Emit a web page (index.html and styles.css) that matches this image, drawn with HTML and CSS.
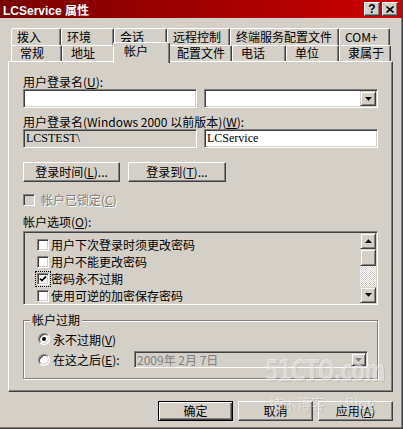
FILE: index.html
```html
<!DOCTYPE html>
<html lang="zh-CN">
<head>
    <meta charset="UTF-8" />
    <title>LCService 属性</title>
    <link rel="stylesheet" href="styles.css">
</head>
<body>
    <div class="window">
        <div class="titlebar">
            <span class="title">LCService 属性</span>
            <div class="title-btns">
                <span class="tbtn help">?</span>
                <span class="tbtn">
                    <svg width="8" height="7" viewBox="0 0 8 7"><path d="M0.5 0.5 L7.5 6.5 M7.5 0.5 L0.5 6.5" stroke="#000" stroke-width="1.6" fill="none"/></svg>
                </span>
            </div>
        </div>

        <div class="content">
            <div class="tabs">
                <div class="tab-row row-back">
                    <div class="tab">拨入</div>
                    <div class="tab">环境</div>
                    <div class="tab">会话</div>
                    <div class="tab">远程控制</div>
                    <div class="tab">终端服务配置文件</div>
                    <div class="tab">COM+</div>
                </div>
                <div class="tab-row row-front">
                    <div class="tab">常规</div>
                    <div class="tab">地址</div>
                    <div class="tab active">帐户</div>
                    <div class="tab">配置文件</div>
                    <div class="tab">电话</div>
                    <div class="tab">单位</div>
                    <div class="tab">隶属于</div>
                </div>
            </div>

            <div class="panel">
                <div class="label">用户登录名(<u>U</u>):</div>
                <div class="pair">
                    <div class="field"></div>
                    <div class="field combo">
                        <span class="drop">
                            <svg width="7" height="4" viewBox="0 0 7 4"><polygon points="0,0 7,0 3.5,3.8" fill="#000"/></svg>
                        </span>
                    </div>
                </div>

                <div class="label gap7">用户登录名(Windows 2000 以前版本)(<u>W</u>):</div>
                <div class="pair">
                    <div class="field disabled">LCSTEST\</div>
                    <div class="field">LCService</div>
                </div>

                <div class="btn-row">
                    <button class="btn w97">登录时间(<u>L</u>)...</button>
                    <button class="btn w98">登录到(<u>T</u>)...</button>
                </div>

                <div class="check-row disabled-text">
                    <span class="cb dis"></span>
                    <span>帐户已锁定(<u>C</u>)</span>
                </div>

                <div class="label gap8">帐户选项(<u>O</u>):</div>
                <div class="listbox">
                    <div class="items">
                        <div class="item"><span class="cb"></span>用户下次登录时须更改密码</div>
                        <div class="item"><span class="cb"></span>用户不能更改密码</div>
                        <div class="item"><span class="cb focus">
                            <svg width="8" height="8" viewBox="0 0 8 8"><path d="M1 3.6 L3 5.6 L7 1.4" stroke="#000" stroke-width="1.7" fill="none"/></svg>
                        </span>密码永不过期</div>
                        <div class="item"><span class="cb"></span>使用可逆的加密保存密码</div>
                    </div>
                    <div class="scrollbar">
                        <span class="sb-btn">
                            <svg width="7" height="4" viewBox="0 0 7 4"><polygon points="0,4 7,4 3.5,0.2" fill="#000"/></svg>
                        </span>
                        <span class="sb-thumb"></span>
                        <span class="sb-track"></span>
                        <span class="sb-btn">
                            <svg width="7" height="4" viewBox="0 0 7 4"><polygon points="0,0 7,0 3.5,3.8" fill="#000"/></svg>
                        </span>
                    </div>
                </div>

                <div class="group">
                    <div class="group-title">帐户过期</div>
                    <div class="radio-row">
                        <span class="radio on"></span>
                        <span>永不过期(<u>V</u>)</span>
                    </div>
                    <div class="radio-row second">
                        <span class="radio"></span>
                        <span>在这之后(<u>E</u>):</span>
                        <div class="date-box">
                            <span>2009年 2月 7日</span>
                            <span class="drop small">
                                <svg width="7" height="4" viewBox="0 0 7 4"><polygon points="0,0 7,0 3.5,3.8" fill="#808080"/></svg>
                            </span>
                        </div>
                    </div>
                </div>
            </div>

            <div class="actions">
                <button class="btn act default">确定</button>
                <button class="btn act">取消</button>
                <button class="btn act">应用(<u>A</u>)</button>
            </div>
        </div>

        <div class="watermark">
            <div class="wm-big">51CTO.com</div>
            <div class="wm-small">技术博客 — Blog</div>
        </div>
    </div>
</body>
</html>
```

FILE: styles.css
```css
* {
    box-sizing: border-box;
}
html, body {
    margin: 0;
    background: #d4d0c8;
}
body {
    font-family: "Noto Sans CJK SC", sans-serif;
    font-size: 12px;
    color: #000;
}
u {
    text-decoration: underline;
}
.window {
    position: relative;
    width: 403px;
    height: 429px;
    border-right: 1px solid #404040;
    border-bottom: 1px solid #404040;
    box-shadow: inset -1px -1px #808080;
    overflow: hidden;
}
.titlebar {
    height: 18px;
    background: linear-gradient(to right, #780000, #cc0000);
    display: flex;
    justify-content: space-between;
    align-items: center;
    padding: 0 4px 0 3px;
}
.title {
    color: #fff;
    font: bold 12px "Liberation Sans", "Noto Sans CJK SC", sans-serif;
}
.title-btns {
    display: flex;
    gap: 2px;
}
.tbtn {
    width: 16px;
    height: 14px;
    background: #d4d0c8;
    border: 1px solid;
    border-color: #fff #404040 #404040 #fff;
    box-shadow: inset -1px -1px #808080;
    display: flex;
    align-items: center;
    justify-content: center;
}
.help {
    font: bold 12px "Liberation Sans", sans-serif;
    line-height: 12px;
}
.content {
    padding: 0 8px;
}
.tabs {
    padding: 10px 0 0 3px;
}
.tab-row {
    display: grid;
}
.row-back {
    grid-template-columns: 50px 53px 53px 63px 109px 51px;
    height: 17px;
}
.row-front {
    grid-template-columns: 51px 53px 53px 64px 54px 53px 52px;
    height: 16px;
}
.tab {
    border: 1px solid;
    border-bottom: 0;
    border-color: #fff #404040 transparent #fff;
    box-shadow: inset -1px 0 #808080;
    border-radius: 2px 2px 0 0;
    white-space: nowrap;
    background: #d4d0c8;
}
.row-back .tab {
    padding-left: 5px;
    line-height: 15px;
}
.row-front .tab {
    padding-left: 8px;
    line-height: 14px;
}
.row-front .tab.active {
    position: relative;
    z-index: 2;
    margin: -3px -2px -2px -2px;
    padding-left: 10px;
    line-height: 15px;
}
.panel {
    width: 385px;
    height: 331px;
    border: 1px solid;
    border-color: #fff #404040 #404040 #fff;
    box-shadow: inset -1px -1px #808080;
    padding: 13px 14px 0;
}
.label {
    line-height: 14px;
    height: 14px;
    white-space: nowrap;
}
.gap7 {
    margin-top: 7px;
}
.gap8 {
    margin-top: 8px;
}
.pair {
    display: grid;
    grid-template-columns: 1fr 1fr;
    gap: 7px;
}
.field {
    height: 19px;
    background: #fff;
    border: 1px solid;
    border-color: #808080 #fff #fff #808080;
    box-shadow: inset 1px 1px #404040, inset -1px -1px #d4d0c8;
    padding-left: 2px;
    font: 12px "Liberation Serif", serif;
    line-height: 17px;
}
.field.disabled {
    background: #d4d0c8;
}
.combo {
    display: flex;
    justify-content: flex-end;
    padding: 1px;
}
.drop {
    width: 16px;
    height: 15px;
    background: #d4d0c8;
    border: 1px solid;
    border-color: #d4d0c8 #404040 #404040 #d4d0c8;
    box-shadow: inset 1px 1px #fff, inset -1px -1px #808080;
    display: flex;
    align-items: center;
    justify-content: center;
}
.drop.small {
    width: 15px;
    height: 13px;
}
.btn-row {
    display: flex;
    gap: 8px;
    margin-top: 14px;
}
.btn {
    height: 20px;
    padding: 0;
    background: #d4d0c8;
    border: 1px solid;
    border-color: #fff #404040 #404040 #fff;
    box-shadow: inset -1px -1px #808080;
    font-family: "Noto Sans CJK SC", sans-serif;
    font-size: 12px;
    line-height: 16px;
    color: #000;
}
.w97 {
    width: 97px;
}
.w98 {
    width: 98px;
}
.check-row {
    display: flex;
    align-items: center;
    gap: 6px;
    height: 14px;
    line-height: 14px;
    margin-top: 11px;
}
.disabled-text {
    color: #808080;
    text-shadow: 1px 1px #fff;
}
.cb {
    flex: none;
    width: 12px;
    height: 12px;
    background: #fff;
    border: 1px solid;
    border-color: #808080 #fff #fff #808080;
    box-shadow: inset 1px 1px #404040, inset -1px -1px #d4d0c8;
    display: flex;
    align-items: center;
    justify-content: center;
}
.cb.dis {
    background: #d4d0c8;
}
.cb.focus {
    outline: 1px dotted #000;
    outline-offset: 1px;
}
.listbox {
    margin-top: 2px;
    height: 74px;
    border: 1px solid;
    border-color: #808080 #fff #fff #808080;
    box-shadow: inset 1px 1px #404040, inset -1px -1px #d4d0c8;
    padding: 1px;
    display: flex;
    overflow: hidden;
}
.items {
    flex: 1;
    padding: 3px 0 0 12px;
    overflow: hidden;
}
.item {
    display: flex;
    align-items: center;
    gap: 2px;
    height: 17px;
    white-space: nowrap;
}
.scrollbar {
    width: 16px;
    display: flex;
    flex-direction: column;
}
.sb-btn, .sb-thumb {
    flex: none;
    height: 16px;
    background: #d4d0c8;
    border: 1px solid;
    border-color: #d4d0c8 #404040 #404040 #d4d0c8;
    box-shadow: inset 1px 1px #fff, inset -1px -1px #808080;
    display: flex;
    align-items: center;
    justify-content: center;
}
.sb-thumb {
    height: 17px;
}
.sb-track {
    flex: 1;
    background-image: repeating-conic-gradient(#fff 0 25%, #d4d0c8 0 50%);
    background-size: 2px 2px;
}
.group {
    margin-top: 15px;
    height: 59px;
    border: 1px solid #808080;
    box-shadow: inset 1px 1px #fff, 1px 1px #fff;
    padding: 0 9px 0 14px;
}
.group-title {
    width: fit-content;
    margin: -8px 0 0 -8px;
    padding: 0 2px;
    background: #d4d0c8;
    line-height: 14px;
}
.radio-row {
    display: flex;
    align-items: center;
    gap: 3px;
    height: 14px;
    margin-top: 5px;
    white-space: nowrap;
}
.radio-row.second {
    height: 17px;
}
.radio {
    flex: none;
    width: 12px;
    height: 12px;
    border-radius: 50%;
    background: #fff;
    border: 1px solid;
    border-color: #808080 #fff #fff #808080;
    box-shadow: inset 1px 1px #404040, inset -1px -1px #d4d0c8;
    display: flex;
    align-items: center;
    justify-content: center;
}
.radio.on::after {
    content: "";
    width: 4px;
    height: 4px;
    border-radius: 50%;
    background: #000;
}
.date-box {
    margin-left: auto;
    width: 234px;
    height: 17px;
    background: #d4d0c8;
    border: 1px solid;
    border-color: #808080 #fff #fff #808080;
    box-shadow: inset 1px 1px #404040, inset -1px -1px #d4d0c8;
    padding: 1px 1px 1px 2px;
    display: flex;
    justify-content: space-between;
    align-items: center;
    color: #808080;
    line-height: 13px;
}
.actions {
    width: 385px;
    display: flex;
    justify-content: flex-end;
    gap: 5px;
    margin-top: 9px;
}
.act {
    width: 75px;
}
.btn.default {
    border: 1px solid #000;
    box-shadow: inset 1px 1px #fff, inset -1px -1px #404040, inset -2px -2px #808080;
}
.watermark {
    position: absolute;
    left: 265px;
    top: 354px;
    pointer-events: none;
    color: rgba(255, 255, 255, 0.45);
    text-shadow: 1px 1px 0 rgba(110, 110, 110, 0.2);
}
.wm-big {
    font: bold 30px "DejaVu Sans Condensed", "DejaVu Sans", sans-serif;
    font-stretch: condensed;
    letter-spacing: -1px;
    line-height: 34px;
    transform: scaleX(0.74);
    transform-origin: left center;
    white-space: nowrap;
}
.wm-small {
    font-size: 14px;
    line-height: 18px;
    padding-left: 4px;
    margin-top: 6px;
    white-space: nowrap;
}
```
